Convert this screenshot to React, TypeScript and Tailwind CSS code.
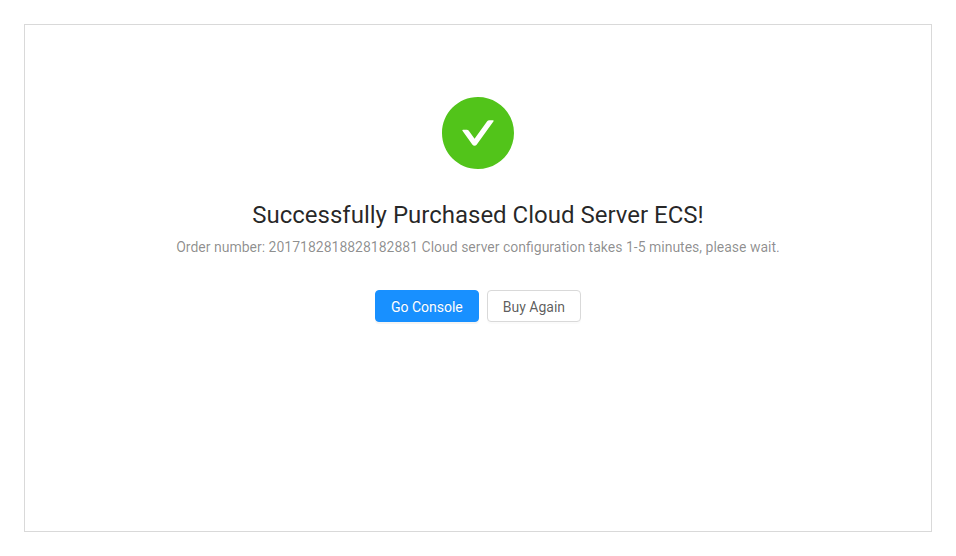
export default function App() {
    return (
        <main className="p-6 min-h-screen flex bg-white font-['Roboto',sans-serif]">
            <section className="flex-1 border border-[#d9d9d9] px-8 pt-18 pb-12 text-center">
                <svg
                    viewBox="64 64 896 896"
                    className="size-[72px] mx-auto mb-6 text-[#52c41a]"
                    fill="currentColor"
                    aria-hidden="true"
                >
                    <path d="M512 64C264.6 64 64 264.6 64 512s200.600 448 448 448 448-200.600 448-448S759.400 64 512 64zm193.500 301.700l-210.600 292a31.800 31.800 0 0 1-51.700 0L318.500 484.900c-3.800-5.300 0-12.700 6.500-12.700h46.900c10.200 0 19.900 4.900 25.900 13.300l71.200 98.800 157.200-218c6-8.300 15.600-13.300 25.900-13.300H699c6.500 0 10.300 7.400 6.500 12.700z" />
                </svg>

                <h1 className="pt-0.5 text-2xl leading-[41px] text-black/85">
                    Successfully Purchased Cloud Server ECS!
                </h1>
                <p className="text-sm leading-[22px] text-black/45">
                    Order number: 2017182818828182881 Cloud server configuration
                    takes 1-5 minutes, please wait.
                </p>

                <div className="mt-8 flex justify-center gap-2">
                    <button
                        type="button"
                        className="h-8 px-[15px] pt-0.5 text-sm rounded border border-[#1890ff] bg-[#1890ff] text-white shadow-[0_2px_0_rgba(0,0,0,0.045)] [text-shadow:0_-1px_0_rgba(0,0,0,0.12)] cursor-pointer"
                    >
                        Go Console
                    </button>
                    <button
                        type="button"
                        className="h-8 px-[15px] pt-0.5 text-sm rounded border border-[#d9d9d9] bg-white text-black/65 shadow-[0_2px_0_rgba(0,0,0,0.016)] cursor-pointer"
                    >
                        Buy Again
                    </button>
                </div>
            </section>
        </main>
    );
}
